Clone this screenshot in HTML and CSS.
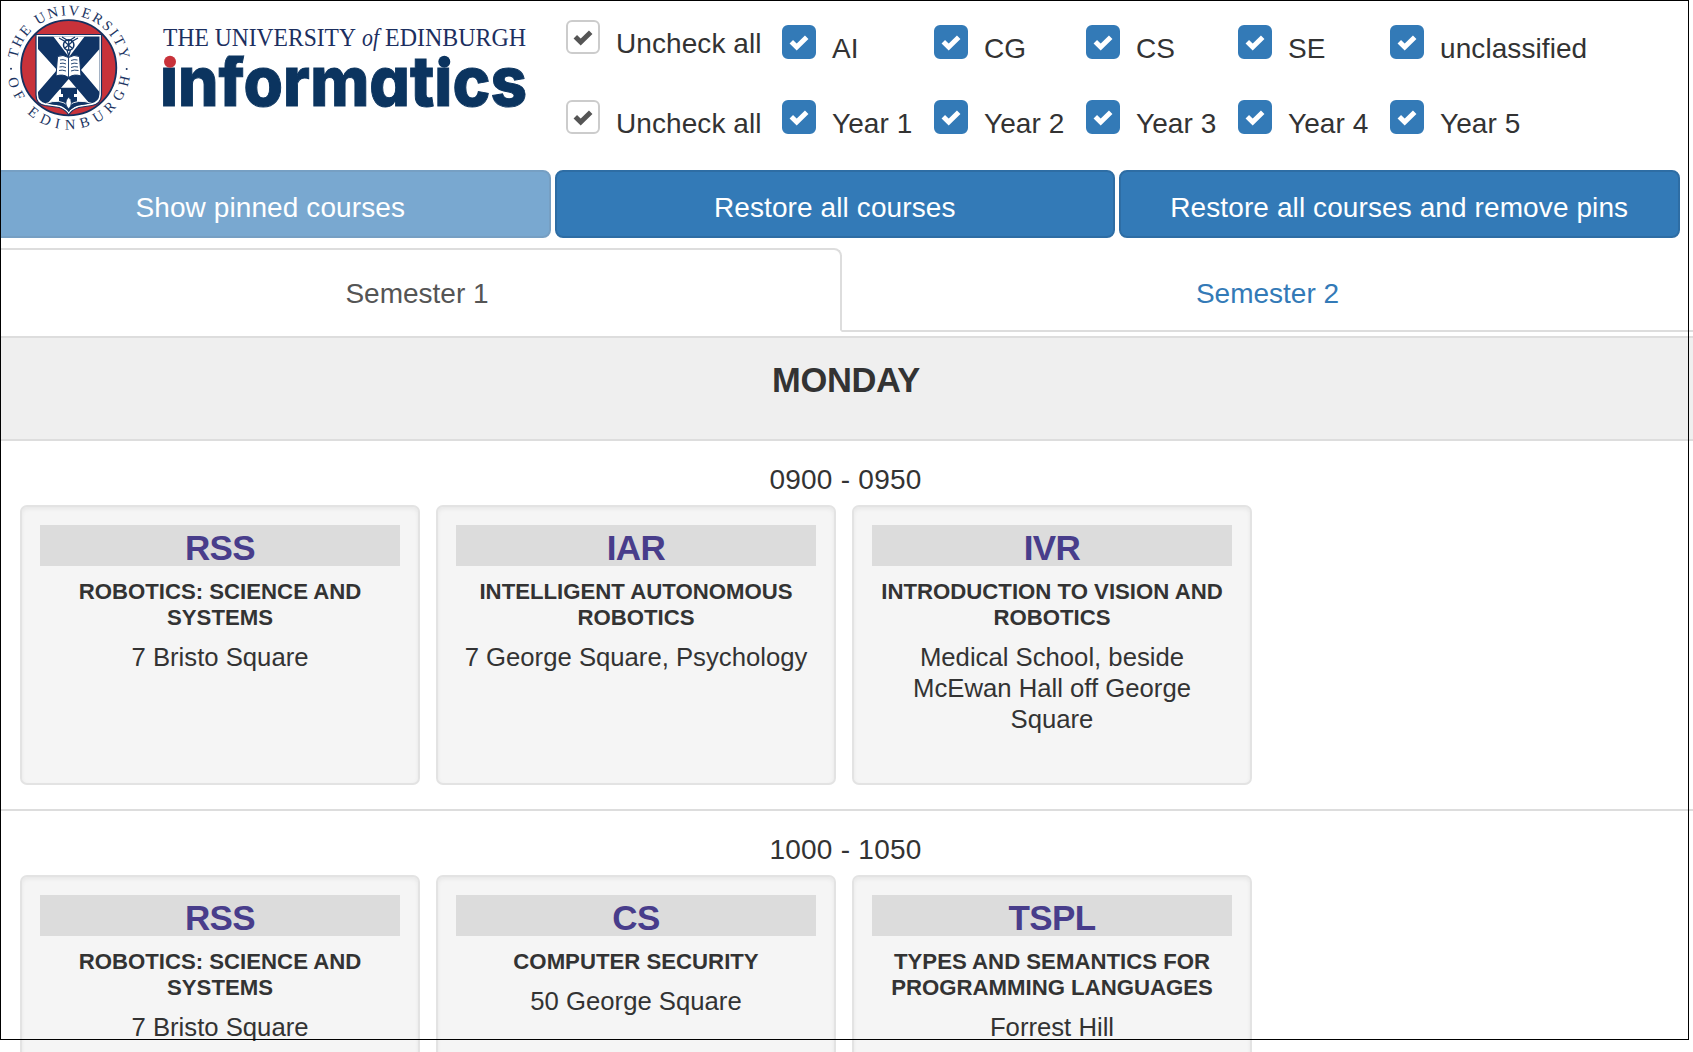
FILE: index.html
```
<!DOCTYPE html>
<html lang="en">
<head>
<meta charset="utf-8">
<title>Informatics timetable</title>
<link rel="stylesheet" href="styles.css">
</head>
<body>
<svg width="0" height="0" class="defs" aria-hidden="true">
  <symbol id="tick" viewBox="0 0 20 16"><path d="M2.300 6.800 L7.700 12 L17.700 2.300" fill="none" stroke="currentColor" stroke-width="5"/></symbol>
</svg>
<div class="frame"></div>
<header class="top">
  <svg class="logo" width="540" height="140" viewBox="0 0 540 140">
    <defs>
      <path id="arcTop" d="M16.3 67.7 A52.4 52.4 0 0 1 121.1 67.7"/>
      <path id="arcBottom" d="M7 67.7 A61.7 61.7 0 0 0 130.4 67.7"/>
      <clipPath id="shieldClip"><path d="M38 36.500H99.500V94Q99 102 91 103.500L78 105.500Q71 108 68.800 112Q66 108 60 105.500L46 103.500Q38 102 38 94Z"/></clipPath>
      <clipPath id="wordClip"><path d="M155 67H205V55.500H437V67H535V115H155Z"/></clipPath>
    </defs>
    <circle cx="68.700" cy="67.700" r="47.600" fill="#c8323a" stroke="#14305f" stroke-width="1.800"/>
    <path d="M36 34.500H101.500V95Q101 104 92 105.500L79 107.500Q71 110 68.800 115Q66 110 59 107.500L45 105.500Q36 104 36 95Z" fill="#fff" stroke="#14305f" stroke-width="1.200"/>
    <g clip-path="url(#shieldClip)">
      <rect x="37" y="35" width="64" height="80" fill="#103465"/>
      <path d="M53 36H85L69 57ZM38 49L57 70L38 92ZM99.500 49L81 70L99.500 92ZM68.700 79L90 104H47Z" fill="#fff"/>
      <path d="M61 88h16v6h-3v3h3v7h-6v-5h-4v5h-8v-7h4v-3h-2z" fill="#103465"/>
      <path d="M46 103.500Q60 98 68.500 106Q77 98 92 103.500L78 108L69 114L59 108Z" fill="#103465" stroke="#fff" stroke-width=".9"/>
      <path d="M68.700 97Q63 103 68.700 109Q74 103 68.700 97Z" fill="#fff" stroke="#103465" stroke-width=".7"/>
    </g>
    <g fill="none" stroke="#103465" stroke-width="1.200">
      <circle cx="68.700" cy="45" r="5.200" fill="#fff" stroke-width="1.500"/>
      <path d="M59 38L66 42M78 38L71 42M65 42L72 48M72 42L65 48M68.700 40V50M62 37L68.700 41L75 37M67 50L68.700 56L70.500 50"/>
      <path d="M59 88.500h18M61 91h4m3 0h6" stroke-width="1.500"/>
    </g>
    <path d="M68.500 57.500Q63 54 57.500 56.500L56 76Q63 73.500 68.500 77.500Q74 73.500 81 76L79.500 56.500Q74 54 68.500 57.500Z" fill="#fff" stroke="#103465" stroke-width="1"/>
    <path d="M68.500 57.500V77M60 60q3-1 6 .5M60 63.500q3-1 6 .5M59.500 67q3-1 6.500.5M59 70.500q3-1 7 .5M71 60.500q3-1.500 6.500-.5M71 64q3-1.500 6.500-.5M71 67.500q3-1.500 7-.5M71 71q3-1.500 7.500-.5" fill="none" stroke="#103465" stroke-width=".9"/>
    <g class="seal-text" fill="#1c3563">
      <text><textPath href="#arcTop" startOffset="9" textLength="147">THE UNIVERSITY</textPath></text>
      <text><textPath href="#arcBottom" startOffset="11" textLength="173">OF EDINBURGH</textPath></text>
      <circle cx="11" cy="68.700" r="1"/><circle cx="126.700" cy="69" r="1"/>
    </g>
    <g class="wordmark" fill="#1c2f5f">
      <text x="163" y="46" textLength="193" lengthAdjust="spacingAndGlyphs">THE UNIVERSITY</text>
      <text x="362" y="46" font-style="italic" textLength="17" lengthAdjust="spacingAndGlyphs">of</text>
      <text x="385" y="46" textLength="141" lengthAdjust="spacingAndGlyphs">EDINBURGH</text>
    </g>
    <g clip-path="url(#wordClip)">
      <text class="informatics" x="160" y="105.500" textLength="367" lengthAdjust="spacingAndGlyphs">informatics</text>
    </g>
    <circle cx="170" cy="61.800" r="6" fill="#c8323a"/>
    <circle cx="444.300" cy="61.800" r="6" fill="#0b345f"/>
  </svg>
  <div class="filters">
    <div class="filter-row">
      <div class="all"><span class="box"><svg><use href="#tick"/></svg></span><span>Uncheck all</span></div>
      <div class="opt"><span class="box on"><svg><use href="#tick"/></svg></span><span>AI</span></div>
      <div class="opt"><span class="box on"><svg><use href="#tick"/></svg></span><span>CG</span></div>
      <div class="opt"><span class="box on"><svg><use href="#tick"/></svg></span><span>CS</span></div>
      <div class="opt"><span class="box on"><svg><use href="#tick"/></svg></span><span>SE</span></div>
      <div class="opt"><span class="box on"><svg><use href="#tick"/></svg></span><span>unclassified</span></div>
    </div>
    <div class="filter-row years">
      <div class="all"><span class="box"><svg><use href="#tick"/></svg></span><span>Uncheck all</span></div>
      <div class="opt"><span class="box on"><svg><use href="#tick"/></svg></span><span>Year 1</span></div>
      <div class="opt"><span class="box on"><svg><use href="#tick"/></svg></span><span>Year 2</span></div>
      <div class="opt"><span class="box on"><svg><use href="#tick"/></svg></span><span>Year 3</span></div>
      <div class="opt"><span class="box on"><svg><use href="#tick"/></svg></span><span>Year 4</span></div>
      <div class="opt"><span class="box on"><svg><use href="#tick"/></svg></span><span>Year 5</span></div>
    </div>
  </div>
</header>
<div class="actions">
  <button class="btn faded">Show pinned courses</button>
  <button class="btn">Restore all courses</button>
  <button class="btn">Restore all courses and remove pins</button>
</div>
<nav class="tabs">
  <a class="tab active">Semester 1</a>
  <a class="tab">Semester 2</a>
</nav>
<h2 class="day">MONDAY</h2>
<section class="slot">
  <div class="time">0900 - 0950</div>
  <div class="cards">
    <article class="card"><h3>RSS</h3><h4>ROBOTICS: SCIENCE AND SYSTEMS</h4><p>7 Bristo Square</p></article>
    <article class="card"><h3>IAR</h3><h4>INTELLIGENT AUTONOMOUS ROBOTICS</h4><p>7 George Square, Psychology</p></article>
    <article class="card"><h3>IVR</h3><h4>INTRODUCTION TO VISION AND ROBOTICS</h4><p>Medical School, beside McEwan Hall off George Square</p></article>
  </div>
</section>
<section class="slot last">
  <div class="time">1000 - 1050</div>
  <div class="cards">
    <article class="card"><h3>RSS</h3><h4>ROBOTICS: SCIENCE AND SYSTEMS</h4><p>7 Bristo Square</p></article>
    <article class="card"><h3>CS</h3><h4>COMPUTER SECURITY</h4><p>50 George Square</p></article>
    <article class="card"><h3>TSPL</h3><h4>TYPES AND SEMANTICS FOR PROGRAMMING LANGUAGES</h4><p>Forrest Hill</p></article>
  </div>
</section>
</body>
</html>
```
FILE: styles.css
```
* { box-sizing: border-box; }
html { overflow: hidden; }
body {
  margin: 0;
  height: 1052px;
  overflow: hidden;
  background: #fff;
  color: #333;
  font-family: "Liberation Sans", Arial, sans-serif;
  font-size: 28px;
}
.defs { display: block; }
/* thin outline laid over the page content */
.frame {
  position: absolute;
  left: 0;
  top: 0;
  width: 1689px;
  height: 1040px;
  border: 1px solid #000;
  z-index: 2;
  pointer-events: none;
}
.top { display: flex; height: 170px; }
.logo { flex: none; display: block; }
.seal-text { font: 14.5px "Liberation Serif", serif; }
.wordmark { font: 24.5px "Liberation Serif", serif; }
.informatics {
  font: 800 69px Inter, sans-serif;
  font-feature-settings: "cv11";
  fill: #0b345f;
  stroke: #0b345f;
  stroke-width: 1px;
}
.filters { padding: 20px 0 0 26px; }
.filter-row { display: flex; height: 80px; line-height: 34px; letter-spacing: .08px; white-space: nowrap; }
.all, .opt { display: flex; }
.all { width: 216px; }
.opt { width: 152px; padding-top: 5px; }
.years .opt { padding-top: 0; }
.all > span + span, .opt > span + span { margin: 7px 0 0 16px; }
.box {
  flex: none;
  display: flex;
  align-items: center;
  justify-content: center;
  width: 34px;
  height: 34px;
  border: 2px solid #ccc;
  border-radius: 6px;
  color: #555;
}
.box.on { background: #337ab7; border-color: #337ab7; color: #fff; }
.box svg { width: 20px; height: 16px; margin-top: 2px; }
.actions { display: flex; gap: 4px; margin-left: -10px; }
.btn {
  width: 560.5px;
  height: 68px;
  padding: 7px 0 0;
  border: 2px solid #2e6da4;
  border-radius: 8px;
  background: #337ab7;
  color: #fff;
  font: inherit;
  letter-spacing: .1px;
}
.faded { opacity: .65; }
.tabs { display: flex; height: 84px; margin: 10px 0 4px -8px; line-height: 80px; text-align: center; }
.tab { flex: 1; padding-top: 6px; border-bottom: 2px solid #ddd; color: #337ab7; }
.tab.active {
  flex: none;
  width: 850px;
  padding-top: 4px;
  border: 2px solid #ddd;
  border-bottom-color: transparent;
  border-radius: 8px 8px 0 0;
  color: #555;
}
.day {
  height: 105px;
  margin: 0;
  padding: 22px 1px 0 0;
  border: solid #ddd;
  border-width: 2px 0;
  background: #efefef;
  font-size: 34.5px;
  letter-spacing: -.4px;
  line-height: 40px;
  text-align: center;
}
.slot { height: 370px; padding-top: 19px; border-bottom: 2px solid #ddd; }
.last { height: 241px; overflow: hidden; border-bottom: 0; }
.time { height: 45px; padding-right: 2px; line-height: 40px; letter-spacing: .25px; text-align: center; }
.cards { display: flex; gap: 16px; padding-left: 20px; }
.card {
  width: 400px;
  height: 280px;
  padding: 18px;
  border: 2px solid #e3e3e3;
  border-radius: 7px;
  background: #f5f5f5;
  box-shadow: inset 0 2px 4px rgba(0, 0, 0, .06);
  text-align: center;
}
.card h3 { height: 41px; margin: 0; background: #dcdcdc; color: #483d8b; font-size: 35px; letter-spacing: -.6px; line-height: 45px; }
.card h4 { margin: 13px 0 11px; font-size: 22.2px; line-height: 26px; }
.card p { margin: 0; padding: 0 8px; font-size: 25.7px; line-height: 31px; }
```
